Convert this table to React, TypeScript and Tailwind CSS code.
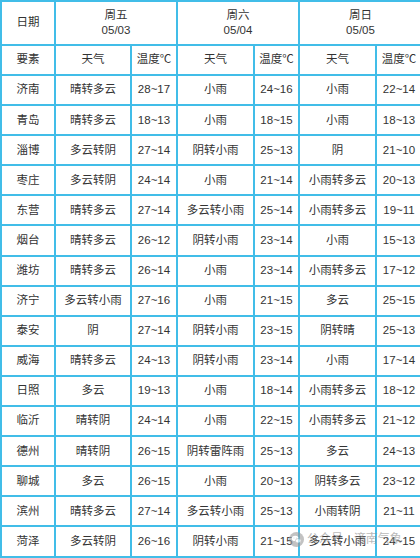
import React from "react";

type Day = [string, string];

const days = [
  { name: "周五", date: "05/03" },
  { name: "周六", date: "05/04" },
  { name: "周日", date: "05/05" },
];

const rows: { city: string; d: Day[] }[] = [
  { city: "济南", d: [["晴转多云", "28~17"], ["小雨", "24~16"], ["小雨", "22~14"]] },
  { city: "青岛", d: [["晴转多云", "18~13"], ["小雨", "18~15"], ["小雨", "18~13"]] },
  { city: "淄博", d: [["多云转阴", "27~14"], ["阴转小雨", "25~13"], ["阴", "21~10"]] },
  { city: "枣庄", d: [["多云转阴", "24~14"], ["小雨", "21~14"], ["小雨转多云", "20~13"]] },
  { city: "东营", d: [["晴转多云", "27~14"], ["多云转小雨", "25~14"], ["小雨转多云", "19~11"]] },
  { city: "烟台", d: [["晴转多云", "26~12"], ["阴转小雨", "23~14"], ["小雨", "15~13"]] },
  { city: "潍坊", d: [["晴转多云", "26~14"], ["小雨", "23~14"], ["小雨转多云", "17~12"]] },
  { city: "济宁", d: [["多云转小雨", "27~16"], ["小雨", "21~15"], ["多云", "25~15"]] },
  { city: "泰安", d: [["阴", "27~14"], ["阴转小雨", "23~15"], ["阴转晴", "25~13"]] },
  { city: "威海", d: [["晴转多云", "24~13"], ["阴转小雨", "23~14"], ["小雨", "17~14"]] },
  { city: "日照", d: [["多云", "19~13"], ["小雨", "18~14"], ["小雨转多云", "18~12"]] },
  { city: "临沂", d: [["晴转阴", "24~14"], ["小雨", "22~15"], ["小雨转多云", "21~12"]] },
  { city: "德州", d: [["晴转阴", "26~15"], ["阴转雷阵雨", "25~13"], ["多云", "24~13"]] },
  { city: "聊城", d: [["多云", "26~15"], ["小雨", "20~13"], ["阴转多云", "23~12"]] },
  { city: "滨州", d: [["晴转多云", "27~14"], ["多云转小雨", "25~13"], ["小雨转阴", "21~11"]] },
  { city: "菏泽", d: [["多云转阴", "26~16"], ["阴转小雨", "21~15"], ["多云转小雨", "24~15"]] },
];

const cell = "bg-white flex items-center justify-center whitespace-nowrap";

const WeChatIcon = () => (
  <svg width="15" height="15" viewBox="0 0 16 16">
    <circle cx="8" cy="8" r="8" fill="#9a9a9a" />
    <ellipse cx="6.6" cy="6.8" rx="3.6" ry="2.9" fill="#fff" />
    <ellipse cx="9.8" cy="9.4" rx="3" ry="2.4" fill="#fff" stroke="#9a9a9a" strokeWidth="0.8" />
    <circle cx="5.3" cy="6.3" r="0.5" fill="#9a9a9a" />
    <circle cx="7.7" cy="6.3" r="0.5" fill="#9a9a9a" />
  </svg>
);

export default function App() {
  return (
    <div
      className="relative w-[420px] h-[558px] overflow-hidden bg-white text-[11.5px] text-[#333]"
      style={{ fontFamily: '"Liberation Sans", "Noto Sans CJK SC", sans-serif' }}
    >
      <div className="grid w-[423px] grid-cols-[52px_74px_44px_75px_43px_75px_44px] grid-rows-[42px_28px_repeat(16,28.1px)] gap-[2px] p-[2px] bg-[#41bde8]">
        <div className={cell}>日期</div>
        {days.map((day) => (
          <div key={day.date} className={`${cell} col-span-2 flex-col leading-[15px]`}>
            <span>{day.name}</span>
            <span>{day.date}</span>
          </div>
        ))}

        <div className={cell}>要素</div>
        {days.map((day) => (
          <React.Fragment key={day.name}>
            <div className={cell}>天气</div>
            <div className={cell}>温度℃</div>
          </React.Fragment>
        ))}

        {rows.map((r) => (
          <React.Fragment key={r.city}>
            <div className={cell}>{r.city}</div>
            {r.d.map(([w, t], i) => (
              <React.Fragment key={i}>
                <div className={cell}>{w}</div>
                <div className={cell}>{t}</div>
              </React.Fragment>
            ))}
          </React.Fragment>
        ))}
      </div>

      {/* watermark */}
      <div className="absolute left-[289px] top-[530px] flex items-center gap-[3px] text-[12px] text-[#8c8c8c] opacity-60">
        <WeChatIcon />
        <span>公众号 · 济南气象</span>
      </div>
    </div>
  );
}
